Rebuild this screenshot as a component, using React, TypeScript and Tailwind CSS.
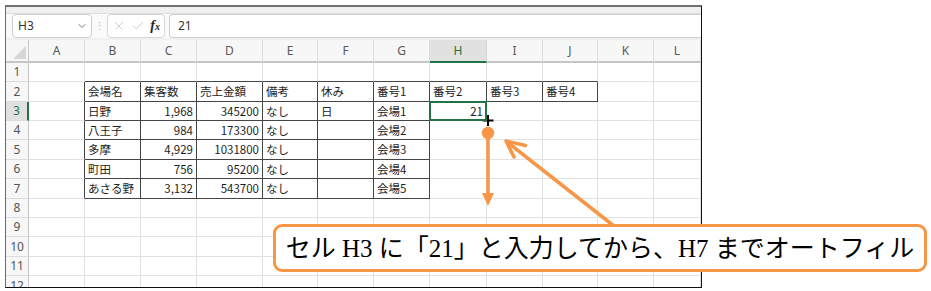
import { ChevronDown, X, Check } from 'lucide-react';

const COLS = ['A', 'B', 'C', 'D', 'E', 'F', 'G', 'H', 'I', 'J', 'K', 'L'];
const COL_W = [
  'w-[56px]', 'w-[56px]', 'w-[56px]', 'w-[66px]', 'w-[55px]', 'w-[56px]',
  'w-[56px]', 'w-[57px]', 'w-[56px]', 'w-[55px]', 'w-[56px]', 'w-[47px]',
];
const ROW_H = [
  'h-[19px]', 'h-[20px]', 'h-[19px]', 'h-[19px]', 'h-[20px]', 'h-[19px]',
  'h-[20px]', 'h-[19px]', 'h-[19px]', 'h-[20px]', 'h-[19px]', 'h-[20px]',
];

// row number -> cell values from column A
const DATA: Record<number, string[]> = {
  2: ['', '会場名', '集客数', '売上金額', '備考', '休み', '番号1', '番号2', '番号3', '番号4'],
  3: ['', '日野', '1,968', '345200', 'なし', '日', '会場1', '21'],
  4: ['', '八王子', '984', '173300', 'なし', '', '会場2'],
  5: ['', '多摩', '4,929', '1031800', 'なし', '', '会場3'],
  6: ['', '町田', '756', '95200', 'なし', '', '会場4'],
  7: ['', 'あさる野', '3,132', '543700', 'なし', '', '会場5'],
};

const bordered = (r: number, c: number) => {
  if (r === 2 && c >= 1 && c <= 9) return true;
  if (r >= 3 && r <= 7 && c >= 1 && c <= 6) return true;
  return false;
};

const isNumber = (r: number, c: number) => r >= 3 && (c === 2 || c === 3 || c === 7);

function Cell({ r, c }: { r: number; c: number }) {
  const value = DATA[r]?.[c] ?? '';
  const rightDark = bordered(r, c) || bordered(r, c + 1);
  const bottomDark = bordered(r, c) || bordered(r + 1, c);
  const selected = r === 3 && c === 7;

  return (
    <div
      className={`relative flex h-full shrink-0 items-center border-r border-b ${COL_W[c]} ${
        rightDark ? 'border-r-[#454545]' : 'border-r-[#e1e1e1]'
      } ${bottomDark ? 'border-b-[#454545]' : 'border-b-[#e1e1e1]'} ${
        isNumber(r, c) ? 'justify-end pr-[3px]' : 'pl-[3px]'
      }`}
    >
      <span className="whitespace-nowrap pt-[1px] text-[11.5px] leading-none text-[#1e1e1e]">{value}</span>
      {selected && (
        <div className="absolute -top-[1px] -left-[1px] -right-[1px] -bottom-[1px] z-10 border-2 border-[#217346]" />
      )}
    </div>
  );
}

export default function App() {
  return (
    <div className="relative h-[291px] w-[931px] overflow-hidden bg-white font-['Noto_Sans_CJK_JP',sans-serif]">
      <div className="ml-[5px] mt-[5px] flex h-[283px] w-[697px] flex-col overflow-hidden border-x border-b border-t-2 border-l-[#6a6a6a] border-r-[#111] border-b-[#111] border-t-[#707070] bg-white">
        {/* ribbon edge */}
        <div className="h-[7px] shrink-0 border-b border-[#dedede] bg-[#efefef]" />

        {/* formula bar */}
        <div className="flex h-[24px] shrink-0 items-stretch bg-[#fafafa] pl-[6px] font-['Noto_Sans',sans-serif] text-[12px] text-[#333]">
          <div className="flex w-[80px] items-center justify-between rounded-[4px] border border-[#cfcfcf] bg-white pl-[5px] pr-[3px]">
            <span>H3</span>
            <ChevronDown size={12} strokeWidth={1.6} className="text-[#555]" />
          </div>
          <div className="flex w-[15px] items-center justify-center text-[11px] text-[#b5b5b5]">⋮</div>
          <div className="flex w-[58px] items-center justify-between rounded-[4px] border border-[#d6d6d6] bg-white pl-[4px] pr-[4px]">
            <X size={14} strokeWidth={1.1} className="text-[#b3b3b3]" />
            <Check size={14} strokeWidth={1.1} className="text-[#b3b3b3]" />
            <span className="font-['Liberation_Serif',serif] text-[14px] font-bold italic leading-none text-[#222]">
              f<span className="text-[10px]">x</span>
            </span>
          </div>
          <div className="ml-[4px] flex flex-1 items-center rounded-l-[4px] border-y border-l border-[#cfcfcf] bg-white pl-[8px]">
            21
          </div>
        </div>
        <div className="h-[2px] shrink-0 bg-[#f0f0f0]" />

        {/* column headers */}
        <div className="flex h-[23px] shrink-0 bg-[#f7f7f7] font-['Noto_Sans',sans-serif] text-[12px] text-[#5a5a5a]">
          <div className="relative w-[23px] shrink-0 border-r border-b-2 border-r-[#c6c6c6] border-b-[#c6c6c6]">
            <svg className="absolute right-[2px] bottom-[2px]" width="13" height="13" viewBox="0 0 13 13">
              <polygon points="13,0 13,13 0,13" fill="#d6d6d6" />
            </svg>
          </div>
          {COLS.map((col, i) => (
            <div
              key={col}
              className={`flex shrink-0 items-center justify-center border-r border-b-2 ${COL_W[i]} ${
                col === 'H'
                  ? 'border-r-[#d4d4d4] border-b-[#217346] bg-[#e1e1e1] text-[#217346]'
                  : 'border-r-[#dcdcdc] border-b-[#c6c6c6]'
              }`}
            >
              {col}
            </div>
          ))}
        </div>

        {/* rows */}
        {ROW_H.map((h, ri) => {
          const r = ri + 1;
          return (
            <div key={r} className={`flex shrink-0 ${h}`}>
              <div
                className={`flex w-[23px] shrink-0 items-center justify-center border-b border-b-[#dcdcdc] font-['Noto_Sans',sans-serif] text-[12px] ${
                  r === 3
                    ? 'border-r-2 border-r-[#217346] bg-[#e1e1e1] text-[#217346]'
                    : 'border-r border-r-[#c6c6c6] bg-[#f7f7f7] text-[#555]'
                }`}
              >
                {r}
              </div>
              {COLS.map((col, c) => (
                <Cell key={col} r={r} c={c} />
              ))}
            </div>
          );
        })}
      </div>

      {/* annotation arrows */}
      <svg className="pointer-events-none absolute left-0 top-0" width="931" height="291">
        <path d="M488 114.5v12M482 120.5h12" stroke="#fff" strokeWidth="4" />
        <path d="M488 115v11M482.5 120.5h11" stroke="#000" strokeWidth="2" />
        <circle cx="488" cy="133" r="6.2" fill="#f79646" />
        <line x1="488" y1="133" x2="488" y2="196" stroke="#f79646" strokeWidth="3.5" />
        <polygon points="482,193 494,193 488,206" fill="#f79646" />
        <line x1="614" y1="226" x2="507" y2="142" stroke="#f79646" strokeWidth="3.5" strokeLinecap="round" />
        <polyline
          points="525.5,145.5 506,141 514,157"
          fill="none"
          stroke="#f79646"
          strokeWidth="3.5"
          strokeLinecap="round"
          strokeLinejoin="round"
        />
      </svg>

      {/* callout */}
      <div className="absolute left-[273px] top-[224px] flex h-[48px] w-[654px] items-center justify-center rounded-[9px] border-[3px] border-[#f79646] bg-white font-['Liberation_Serif','Noto_Sans_CJK_JP',serif] text-[25px] leading-none text-black">
        セル H3 に「21」と入力してから、H7 までオートフィル
      </div>
    </div>
  );
}
